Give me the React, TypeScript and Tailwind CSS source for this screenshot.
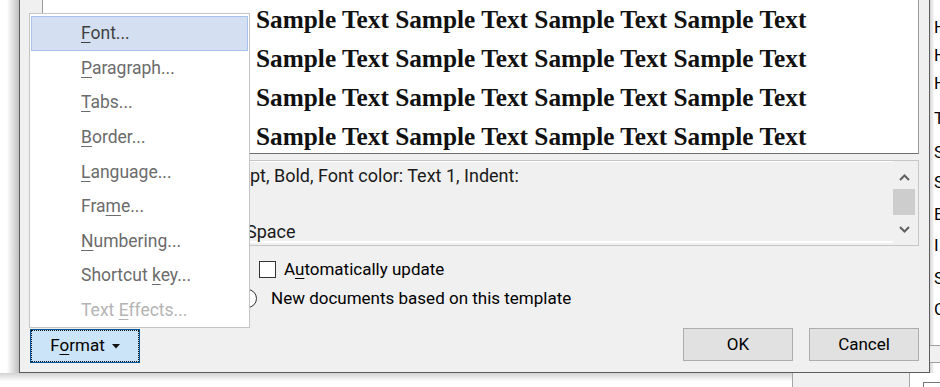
import React from "react";

const ui = "font-['Roboto','Liberation_Sans',sans-serif]";

const menuItems = [
  { pre: "", key: "F", post: "ont...", state: "active" },
  { pre: "", key: "P", post: "aragraph...", state: "normal" },
  { pre: "", key: "T", post: "abs...", state: "normal" },
  { pre: "", key: "B", post: "order...", state: "normal" },
  { pre: "", key: "L", post: "anguage...", state: "normal" },
  { pre: "Fra", key: "m", post: "e...", state: "normal" },
  { pre: "", key: "N", post: "umbering...", state: "normal" },
  { pre: "Shortcut ", key: "k", post: "ey...", state: "normal" },
  { pre: "Text ", key: "E", post: "ffects...", state: "disabled" },
];

// only the part of each description line that shows right of the menu
const descLines = [
  { text: "pt, Bold, Font color: Text 1, Indent:", w: "w-[207px]" },
  { text: "", w: "w-[207px]" },
  { text: "", w: "w-[207px]" },
  { text: "Space", w: "w-[203px]" },
];

const sideItems = [
  ["H", "mt-[17px]"],
  ["H", "mt-[8px]"],
  ["H", "mt-[8px]"],
  ["T", "mt-[15px]"],
  ["S", "mt-[14px]"],
  ["S", "mt-[10px]"],
  ["E", "mt-[12px]"],
  ["I", "mt-[11px]"],
  ["S", "mt-[13px]"],
  ["C", "mt-[11px]"],
];

const Chevron = ({ down }: { down?: boolean }) => (
  <svg width="11" height="7" viewBox="0 0 11 7" className={down ? "rotate-180" : ""}>
    <path d="M1 6 L5.5 1.5 L10 6" fill="none" stroke="#606060" strokeWidth="2" />
  </svg>
);

const FormatMenu = () => (
  <div className="absolute left-[9px] top-[13px] w-[221px] h-[315px] border border-[#c4c4c4] bg-white pt-[2px] z-10 text-[17.5px]">
    {menuItems.map((item) => (
      <div
        key={item.key + item.post}
        className={
          item.state === "active"
            ? "mx-[1px] h-[34.6px] flex items-center pl-[49px] border border-[#a8c3eb] bg-[#d4e0f2] text-[#3f3f3f]"
            : item.state === "disabled"
            ? "mx-[1px] h-[34.6px] flex items-center pl-[49px] border border-transparent text-[#b4b4b4]"
            : "mx-[1px] h-[34.6px] flex items-center pl-[49px] border border-transparent text-[#6b6b6b]"
        }
      >
        <span>
          {item.pre}
          <span className="underline underline-offset-[3px]">{item.key}</span>
          {item.post}
        </span>
      </div>
    ))}
  </div>
);

const Dialog = () => (
  <div className="relative w-[911px] h-[373px] border-x border-b border-[#5c5c5c] bg-[#f0f0f0] flex flex-col">
    <FormatMenu />

    <div className="ml-[22px] w-[877px] h-[154px] border-x border-b border-x-[#9a9a9a] border-b-[#6e6e6e] bg-white pl-[213px] font-['Liberation_Serif',serif] font-bold text-[25.3px] leading-[39px] text-[#111] whitespace-nowrap">
      {[0, 1, 2, 3].map((i) => (
        <div key={i}>Sample Text Sample Text Sample Text Sample Text</div>
      ))}
    </div>

    <div className="mt-[6px] ml-[22px] w-[877px] h-[86px] border border-[#c6c6c6] flex">
      <div className="flex-1 flex flex-col pt-[4px] border-t border-b-2 border-white mb-[2px] text-[18px] leading-[19px] text-[#1a1a1a]">
        {descLines.map((l, i) => (
          <div key={i} className="h-[19px] flex whitespace-nowrap">
            <span className={`${l.w} shrink-0`} />
            <span>{l.text}</span>
          </div>
        ))}
      </div>
      <div className="w-[22px] mr-[3px] flex flex-col">
        <div className="h-[28px] flex items-center justify-center pt-[4px]">
          <Chevron />
        </div>
        <div className="h-[26px] bg-[#cdcdcd]" />
        <div className="h-[28px] flex items-center justify-center">
          <Chevron down />
        </div>
      </div>
    </div>

    <div className="mt-[15px] pl-[239px] h-[17px] flex items-center gap-[8px] text-[17px] text-black">
      <div className="w-[17px] h-[17px] border border-[#333] bg-white" />
      <span>
        A<span className="underline underline-offset-[3px]">u</span>tomatically update
      </span>
    </div>

    <div className="mt-[11px] pl-[218px] h-[19px] flex items-center gap-[14px] text-[17px] text-black">
      <div className="w-[19px] h-[19px] rounded-full border border-[#333] bg-white" />
      <span>New documents based on this template</span>
    </div>

    <div className="mt-[20px] px-[10px] flex items-start text-[17px] text-black">
      <button className="mt-[1px] w-[110px] h-[34px] border border-[#005499] bg-[#cce4f7]">
        <div className="w-full h-full border border-dotted border-[#111] flex items-center justify-center gap-[7px]">
          <span>
            F<span className="underline underline-offset-[3px]">o</span>rmat
          </span>
          <svg width="8" height="5" viewBox="0 0 8 5">
            <path d="M0 0 H8 L4 4.5 Z" fill="#111" />
          </svg>
        </div>
      </button>
      <button className="ml-auto w-[110px] h-[33px] border border-[#adadad] bg-[#e1e1e1]">OK</button>
      <button className="ml-[16px] w-[110px] h-[33px] border border-[#adadad] bg-[#e1e1e1]">Cancel</button>
    </div>
  </div>
);

const StylesPanel = () => (
  <div className="flex-1 overflow-hidden flex flex-col bg-linear-to-r from-[#d4d4d4] to-white to-[45%] text-[17px] text-black">
    {sideItems.map(([name, mt], i) => (
      <div key={i} className={`${mt} h-[20px] leading-[20px] pl-[4px]`}>
        {name}
      </div>
    ))}
    <div className="mt-[26px] h-[18px] border-y border-[#a0a0a0] bg-[#f0f0f0]" />
  </div>
);

export default function App() {
  return (
    <div className={`${ui} w-[940px] h-[387px] overflow-hidden bg-white flex flex-col`}>
      <div className="h-[373px] flex">
        <div className="w-[19px] bg-linear-to-r from-white from-[35%] to-[#c0c0c0]" />
        <Dialog />
        <StylesPanel />
      </div>
      <div className="flex-1 flex">
        <div className="w-[792px] bg-linear-to-b from-[#d2d2d2] to-white to-[60%]" />
        <div className="w-[118px] bg-[#f0f0f0] border-x border-[#a6a6a6]" />
        <div className="flex-1 pt-[9px] pl-[13px] bg-white">
          <div className="h-full border-t border-l border-[#777]" />
        </div>
      </div>
    </div>
  );
}
